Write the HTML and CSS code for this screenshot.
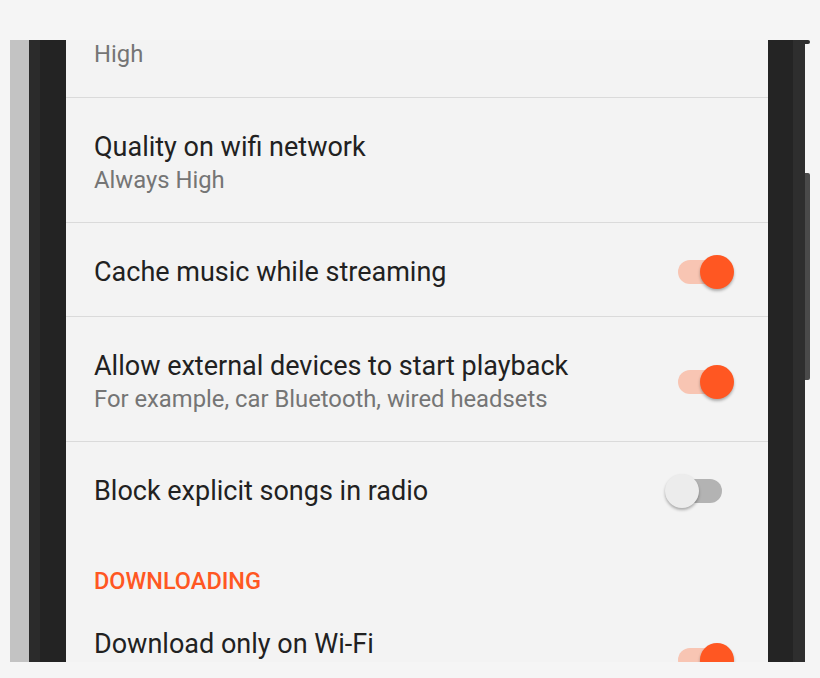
FILE: index.html
```html
<!DOCTYPE html>
<html lang="en">
<head>
    <meta charset="UTF-8">
    <meta name="viewport" content="width=device-width, initial-scale=1.0">
    <title>Settings</title>
    <link rel="stylesheet" href="styles.css">
</head>
<body>
    <div class="device">
        <div class="edge-light"></div>
        <div class="bezel-left"></div>

        <div class="screen">
            <div class="pref-tail">
                <div class="pref-summary">High</div>
            </div>

            <div class="pref pref-two">
                <div class="pref-text">
                    <div class="pref-title">Quality on wifi network</div>
                    <div class="pref-summary">Always High</div>
                </div>
            </div>

            <div class="pref pref-one">
                <div class="pref-text">
                    <div class="pref-title">Cache music while streaming</div>
                </div>
                <div class="switch on"><span class="track"></span><span class="thumb"></span></div>
            </div>

            <div class="pref pref-two">
                <div class="pref-text">
                    <div class="pref-title">Allow external devices to start playback</div>
                    <div class="pref-summary">For example, car Bluetooth, wired headsets</div>
                </div>
                <div class="switch on"><span class="track"></span><span class="thumb"></span></div>
            </div>

            <div class="pref pref-one last">
                <div class="pref-text">
                    <div class="pref-title">Block explicit songs in radio</div>
                </div>
                <div class="switch"><span class="track"></span><span class="thumb"></span></div>
            </div>

            <div class="category">DOWNLOADING</div>

            <div class="pref pref-two">
                <div class="pref-text">
                    <div class="pref-title">Download only on Wi-Fi</div>
                </div>
                <div class="switch on"><span class="track"></span><span class="thumb"></span></div>
            </div>
        </div>

        <div class="bezel-right"></div>
        <div class="side">
            <div class="side-notch"></div>
            <div class="side-button"></div>
        </div>
    </div>
</body>
</html>
```

FILE: styles.css
```css
/* Page */
body {
    margin: 0;
    background-color: #f5f5f5;
    font-family: Roboto, "Noto Sans", Arial, sans-serif;
}

.device {
    display: flex;
    width: 800px;
    height: 622px;
    margin: 40px 0 0 10px;
}

.edge-light {
    width: 19px;
    background-color: #c3c3c3;
}

.bezel-left {
    width: 37px;
    background: linear-gradient(to right, #2b2b2b 11px, #232323 11px);
}

.bezel-right {
    width: 37px;
    background: linear-gradient(to right, #242424 25px, #2e2e2e 25px);
}

.side {
    width: 5px;
}

.side-notch {
    height: 4px;
    background-color: #2e2e2e;
    border-radius: 0 2px 2px 0;
}

.side-button {
    margin-top: 129px;
    height: 207px;
    background-color: #4a4a4a;
    border-radius: 0 2px 2px 0;
}

/* Screen and preference rows */
.screen {
    flex: 1;
    overflow: hidden;
    background-color: #f3f3f3;
}

.pref-tail {
    height: 58px;
    padding: 0 28px;
    box-sizing: border-box;
    border-bottom: 1px solid #dadada;
}

.pref {
    display: flex;
    align-items: center;
    padding: 0 34px 0 28px;
    border-bottom: 1px solid #dadada;
    box-sizing: border-box;
}

.pref-two {
    min-height: 125px;
    padding-top: 32px;
    padding-bottom: 26px;
}

.pref-two .pref-text {
    align-self: flex-start;
}

.pref-one {
    padding-top: 32px;
    padding-bottom: 27px;
}

.pref.last {
    border-bottom: none;
}

.pref-text {
    flex: 1;
}

.pref-title {
    font-size: 27px;
    line-height: 34px;
    color: #212121;
}

.pref-summary {
    font-size: 23.8px;
    line-height: 32px;
    color: #757575;
}

.pref-tail .pref-summary {
    line-height: 28px;
}

.category {
    padding: 32px 28px 0;
    font-size: 23.5px;
    line-height: 28px;
    font-weight: 500;
    color: #ff5722;
}

/* Switches */
.switch {
    position: relative;
    width: 69px;
    height: 34px;
    flex-shrink: 0;
}

.switch .track {
    position: absolute;
    left: 13px;
    top: 5px;
    width: 44px;
    height: 24px;
    border-radius: 12px;
    background-color: #b3b3b3;
}

.switch .thumb {
    position: absolute;
    left: 0;
    top: 0;
    width: 34px;
    height: 34px;
    border-radius: 50%;
    background-color: #ececec;
    box-shadow: 0 2px 3px rgba(0, 0, 0, 0.3);
}

.switch.on .track {
    background-color: #f8c5b3;
}

.switch.on .thumb {
    left: 35px;
    background-color: #ff5722;
}
```
